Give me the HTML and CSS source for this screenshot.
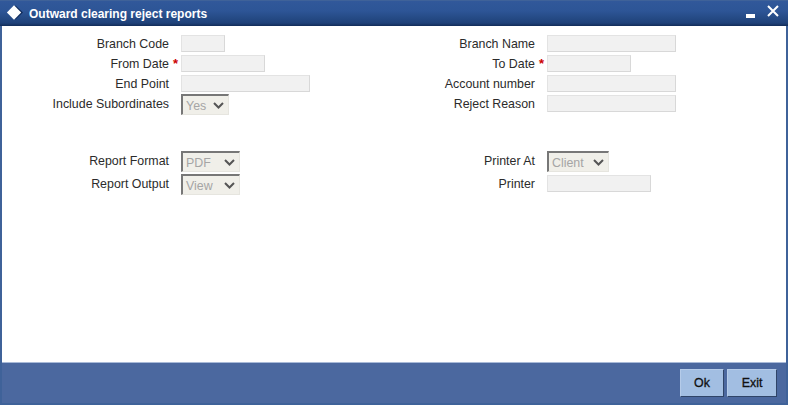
FILE: index.html
```html
<!DOCTYPE html>
<html lang="en">
<head>
<meta charset="utf-8">
<title>Outward clearing reject reports</title>
<link rel="stylesheet" href="styles.css">
</head>
<body>
<div class="window">
  <header class="titlebar">
    <svg class="logo" width="18" height="18" viewBox="0 0 18 18"><path d="M9.5 1.5 17 8.5 9.5 15.5 2 8.5Z" fill="#0f2a5a"/><path d="M8 1.2 15.2 8.5 8 15.8 .9 8.5Z" fill="#fff"/></svg>
    <h1 class="title">Outward clearing reject reports</h1>
    <svg class="win-min" width="9" height="4" viewBox="0 0 9 4"><rect width="9" height="4" fill="#fff"/></svg>
    <svg class="win-close" width="12" height="12" viewBox="0 0 12 12"><path d="M1 1 11 11M11 1 1 11" stroke="#fff" stroke-width="2" fill="none"/></svg>
  </header>
  <main class="content">
    <section class="group group-top">
      <div class="column">
        <div class="row"><label class="label">Branch Code</label><span class="req"></span><input class="field w44" disabled></div>
        <div class="row"><label class="label">From Date</label><span class="req">*</span><input class="field w84" disabled></div>
        <div class="row"><label class="label">End Point</label><span class="req"></span><input class="field w129" disabled></div>
        <div class="row"><label class="label">Include Subordinates</label><span class="req"></span>
          <span class="select w48"><span class="sel-text">Yes</span><svg class="chev" width="11" height="7" viewBox="0 0 11 7"><path d="M1 1 5.5 5.5 10 1" stroke="#555" stroke-width="2" fill="none"/></svg></span></div>
      </div>
      <div class="column">
        <div class="row"><label class="label">Branch Name</label><span class="req"></span><input class="field w129" disabled></div>
        <div class="row"><label class="label">To Date</label><span class="req">*</span><input class="field w84" disabled></div>
        <div class="row"><label class="label">Account number</label><span class="req"></span><input class="field w129" disabled></div>
        <div class="row"><label class="label">Reject Reason</label><span class="req"></span><input class="field w129" disabled></div>
      </div>
    </section>
    <section class="group group-bottom">
      <div class="column">
        <div class="row"><label class="label">Report Format</label><span class="req"></span>
          <span class="select w59"><span class="sel-text">PDF</span><svg class="chev" width="11" height="7" viewBox="0 0 11 7"><path d="M1 1 5.5 5.5 10 1" stroke="#555" stroke-width="2" fill="none"/></svg></span></div>
        <div class="row"><label class="label">Report Output</label><span class="req"></span>
          <span class="select w59"><span class="sel-text">View</span><svg class="chev" width="11" height="7" viewBox="0 0 11 7"><path d="M1 1 5.5 5.5 10 1" stroke="#555" stroke-width="2" fill="none"/></svg></span></div>
      </div>
      <div class="column">
        <div class="row"><label class="label">Printer At</label><span class="req"></span>
          <span class="select w62"><span class="sel-text">Client</span><svg class="chev" width="11" height="7" viewBox="0 0 11 7"><path d="M1 1 5.5 5.5 10 1" stroke="#555" stroke-width="2" fill="none"/></svg></span></div>
        <div class="row"><label class="label">Printer</label><span class="req"></span><input class="field w104" disabled></div>
      </div>
    </section>
  </main>
  <footer class="footer">
    <button class="btn" type="button">Ok</button>
    <button class="btn btn-exit" type="button">Exit</button>
  </footer>
</div>
</body>
</html>
```
FILE: styles.css
```css
* { box-sizing: border-box; }
html, body { margin: 0; padding: 0; }
body {
  width: 788px;
  height: 405px;
  overflow: hidden;
  font-family: "Liberation Sans", Arial, sans-serif;
  font-size: 12.4px;
  color: #2b2b2b;
}
.window {
  width: 788px;
  height: 405px;
  display: flex;
  flex-direction: column;
  background: #3f6299;
  padding: 0 2px 2px;
}
.titlebar {
  height: 26px;
  flex: none;
  margin: 0 -2px;
  display: flex;
  align-items: center;
  padding: 0 9px 0 6px;
  background: linear-gradient(#31589a 0, #2d5596 40%, #1f4279 88%, #122c59 100%);
  border-top: 1px solid #3f6299;
}
.logo { flex: none; margin-top: -1px; }
.title {
  margin: 0 0 0 5px;
  font-size: 12px;
  font-weight: bold;
  color: #fff;
  flex: 1;
}
.win-min { margin: 5px 12px 0 0; }
.win-close { margin-top: -5px; }
.content {
  flex: 1;
  background: #fff;
  min-height: 0;
  padding-top: 8px;
}
.group {
  display: grid;
  grid-template-columns: 366px 1fr;
}
.group-bottom { margin-top: 37px; }
.column { display: flex; flex-direction: column; }
.row {
  display: flex;
  align-items: flex-start;
  height: 20px;
  line-height: 20px;
}
.group-bottom .row { height: 23px; line-height: 21px; }
.label {
  width: 167px;
  text-align: right;
  flex: none;
}
.req {
  width: 12px;
  flex: none;
  color: #c00;
  font-weight: bold;
  font-size: 13px;
  padding-left: 4px;
}
.field {
  height: 17px;
  margin-top: 1px;
  padding: 0;
  background: #f1f1f1;
  border: 1px solid #e3e3e3;
  border-bottom-color: #d8d8d8;
  border-right-color: #d8d8d8;
  border-radius: 0;
  flex: none;
}
.w44 { width: 44px; }
.w84 { width: 84px; }
.w104 { width: 104px; }
.w129 { width: 129px; }
.w48 { width: 48px; }
.w59 { width: 59px; }
.w62 { width: 62px; }
.select {
  height: 21px;
  flex: none;
  display: flex;
  align-items: center;
  justify-content: space-between;
  padding: 1px 4px 0 3px;
  background: #f0efe9;
  border-style: solid;
  border-width: 2px 1px 1px 2px;
  border-color: #777 #e6e5df #e6e5df #777;
  color: #a5a5a5;
  line-height: 16px;
}
.chev { flex: none; }
.footer {
  height: 41px;
  flex: none;
  display: flex;
  justify-content: flex-end;
  align-items: flex-start;
  gap: 3px;
  padding: 6px 9px 0 0;
  background: #4b689f;
  border-top: 1px solid #a9bad8;
}
.btn {
  width: 44px;
  height: 28px;
  padding: 0;
  font: 12.4px "Liberation Sans", Arial, sans-serif;
  -webkit-text-stroke: 0.3px #111;
  color: #111;
  background: #a2bee2;
  border: 1px solid;
  border-color: #b5cbe9 #2f4468 #2f4468 #b5cbe9;
}
.btn-exit { width: 50px; }
```
